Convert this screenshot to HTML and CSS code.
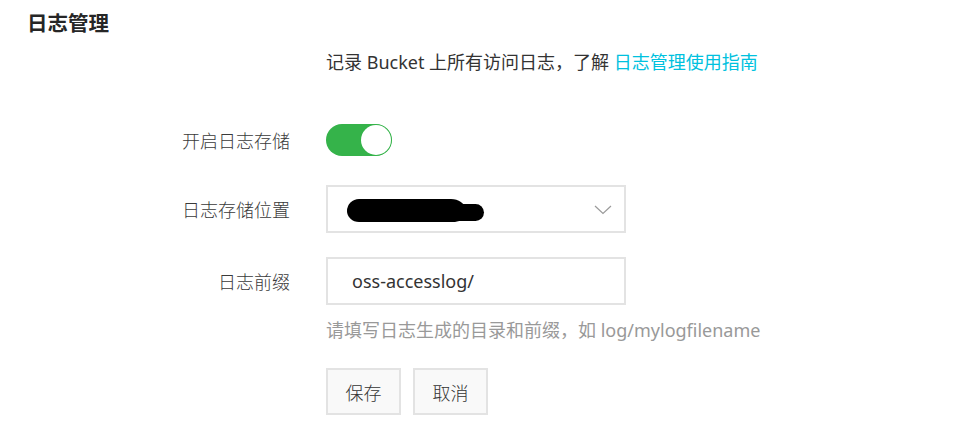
FILE: index.html
```html
<!DOCTYPE html>
<html lang="zh-CN">
<head>
<meta charset="utf-8">
<title>日志管理</title>
<link rel="stylesheet" href="styles.css">
</head>
<body>
  <h1 class="title">日志管理</h1>
  <div class="form">
    <div class="row row-desc">
      <div class="label"></div>
      <div class="control desc">记录 Bucket 上所有访问日志，了解 <a class="link" href="#">日志管理使用指南</a></div>
    </div>
    <div class="row row-switch">
      <div class="label">开启日志存储</div>
      <div class="control">
        <span class="switch"><span class="knob"></span></span>
      </div>
    </div>
    <div class="row row-select">
      <div class="label">日志存储位置</div>
      <div class="control">
        <div class="select">
          <span class="redact"><span class="redact-tail"></span></span>
          <svg class="chevron" width="18" height="10" viewBox="0 0 18 10"><path d="M1 1 L9 8.5 L17 1" fill="none" stroke="#9a9a9a" stroke-width="1.2"/></svg>
        </div>
      </div>
    </div>
    <div class="row row-input">
      <div class="label">日志前缀</div>
      <div class="control">
        <div class="input">oss-accesslog/</div>
      </div>
    </div>
    <div class="row row-hint">
      <div class="label"></div>
      <div class="control hint">请填写日志生成的目录和前缀，如 log/mylogfilename</div>
    </div>
    <div class="row row-buttons">
      <div class="label"></div>
      <div class="control buttons">
        <button class="btn">保存</button>
        <button class="btn">取消</button>
      </div>
    </div>
  </div>
</body>
</html>
```

FILE: styles.css
```css
* { box-sizing: border-box; }
html, body { margin: 0; padding: 0; background: #fff; }
body {
  font-family: "Noto Sans", "Noto Sans CJK SC", sans-serif;
  color: #333;
  width: 954px;
  height: 446px;
  overflow: hidden;
}
.title {
  margin: 0;
  padding: 8px 0 0 27px;
  font-size: 20.5px;
  line-height: 28px;
  font-weight: 700;
  color: #262626;
  font-family: "Noto Sans CJK SC", sans-serif;
}
.form {
  display: flex;
  flex-direction: column;
}
.row {
  display: grid;
  grid-template-columns: 290px 1fr;
  column-gap: 36px;
  align-items: center;
}
.label {
  text-align: right;
  font-size: 18px;
  color: #3a3a3a;
  font-weight: 300;
  font-family: "Noto Sans CJK SC", sans-serif;
}
.control { font-size: 18px; }
.row-desc { margin-top: 13px; height: 26px; }
.desc { line-height: 26px; color: #333; white-space: nowrap; }
.link { color: #00c1de; text-decoration: none; }
.row-switch { margin-top: 49px; height: 32px; }
.switch {
  display: block;
  width: 66px;
  height: 32px;
  border-radius: 16px;
  background: #35b34a;
  position: relative;
}
.knob {
  position: absolute;
  right: 1px;
  top: 1px;
  width: 30px;
  height: 30px;
  border-radius: 50%;
  background: #fff;
  box-shadow: 0 0 0 0.5px #35b34a;
}
.row-select { margin-top: 29px; height: 48px; }
.select {
  width: 300px;
  height: 48px;
  border: 2px solid #e3e3e3;
  display: flex;
  align-items: center;
  justify-content: space-between;
  padding: 0 12px 0 19px;
}
.redact {
  display: block;
  position: relative;
  width: 118px;
  height: 23px;
  background: #000;
  border-radius: 12px 14px 10px 12px / 12px 10px 10px 11px;
  margin-top: 3px;
}
.redact-tail {
  position: absolute;
  left: 100px;
  top: 5px;
  width: 37px;
  height: 17px;
  background: #000;
  border-radius: 8px 9px 9px 8px;
}
.chevron { display: block; margin-top: 1px; }
.row-input { margin-top: 24px; height: 48px; }
.input {
  width: 300px;
  height: 48px;
  border: 2px solid #e3e3e3;
  padding: 0 0 0 24px;
  display: flex;
  align-items: center;
  font-size: 18px;
  color: #333;
}
.row-hint { margin-top: 12px; height: 26px; }
.hint { color: #999; line-height: 26px; white-space: nowrap; }
.row-buttons { margin-top: 25px; height: 47px; }
.buttons { display: flex; gap: 12px; }
.btn {
  width: 75px;
  height: 47px;
  border: 2px solid #e3e3e3;
  background: #f9f9f9;
  font-size: 18px;
  color: #333;
  font-weight: 300;
  font-family: "Noto Sans CJK SC", sans-serif;
  padding: 0;
}
```
